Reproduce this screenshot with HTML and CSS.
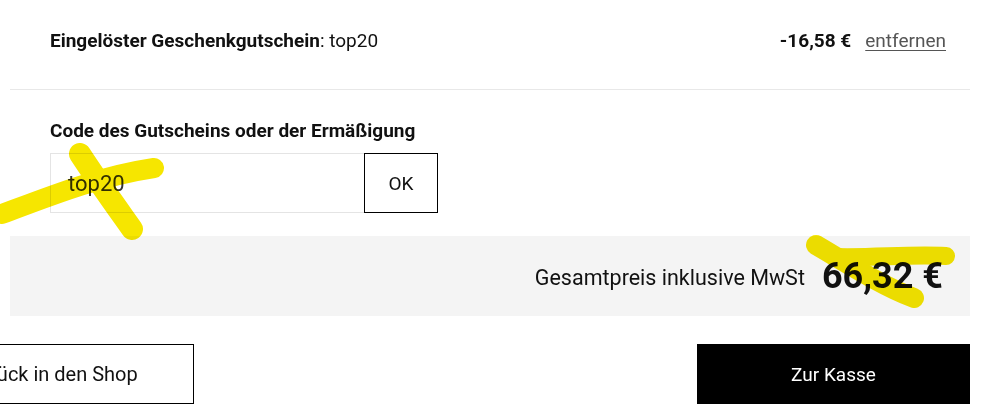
FILE: index.html
```html
<!DOCTYPE html>
<html lang="de">
<head>
<meta charset="utf-8">
<title>Warenkorb</title>
<link rel="stylesheet" href="styles.css">
</head>
<body>
<div class="page">
  <div class="voucher-row">
    <div class="voucher-name"><strong>Eingelöster Geschenkgutschein</strong>: top20</div>
    <div class="voucher-right">
      <span class="voucher-amount">-16,58 €</span>
      <a class="remove" href="#">entfernen</a>
    </div>
  </div>
  <div class="code-block">
    <div class="code-label">Code des Gutscheins oder der Ermäßigung</div>
    <div class="code-form">
      <div class="code-input">top20</div>
      <button class="ok-btn">OK</button>
    </div>
  </div>
  <div class="total-band">
    <span class="total-label">Gesamtpreis inklusive MwSt</span>
    <span class="total-value">66,32 €</span>
  </div>
  <div class="actions">
    <button class="back-btn">Zurück in den Shop</button>
    <button class="checkout-btn">Zur Kasse</button>
  </div>
</div>
<svg class="marks" width="981" height="416" viewBox="0 0 981 416">
  <g stroke="#f6e600" stroke-linecap="round" stroke-linejoin="round" fill="none">
    <path d="M2 214 C 50 196, 100 176, 154 168" stroke-width="20"/>
    <path d="M80 154 C 97 180, 115 205, 132 229" stroke-width="22"/>
    <path d="M816 245 C 845 262, 880 285, 914 298" stroke-width="20"/>
    <path d="M836 257 C 875 258, 910 254, 946 256" stroke-width="18"/>
  </g>
</svg>
</body>
</html>
```

FILE: styles.css
```css
* { box-sizing: border-box; }
html, body { margin: 0; padding: 0; background: #fff; }
body {
  font-family: Roboto, "Liberation Sans", Arial, sans-serif;
  color: #111;
  width: 981px;
  height: 416px;
  overflow: hidden;
  position: relative;
}
.page {
  width: 960px;
  margin-left: 10px;
}
.voucher-row {
  height: 90px;
  border-bottom: 1px solid #e8e8e8;
  display: flex;
  align-items: center;
  justify-content: space-between;
  padding: 0 24px 8px 40px;
  font-size: 19px;
}
.voucher-name strong { font-weight: 700; }
.voucher-right { display: flex; align-items: center; gap: 14px; }
.voucher-amount { font-weight: 700; }
.remove {
  color: #555;
  text-decoration: underline;
  text-underline-offset: 3px;
  text-decoration-thickness: 1px;
}
.code-block {
  padding: 29px 0 0 40px;
}
.code-label {
  font-size: 19px;
  font-weight: 700;
  line-height: 24px;
}
.code-form {
  display: flex;
  margin-top: 10px;
  height: 60px;
}
.code-input {
  width: 314px;
  height: 60px;
  border: 1px solid #e4e4e4;
  border-right: none;
  padding-left: 17px;
  display: flex;
  align-items: center;
  font-size: 22px;
  color: #333;
}
.ok-btn {
  width: 74px;
  height: 60px;
  border: 1px solid #000;
  background: #fff;
  font-family: inherit;
  font-size: 19px;
  color: #111;
  padding: 0;
}
.total-band {
  margin-top: 23px;
  height: 80px;
  background: #f4f4f4;
  display: flex;
  align-items: center;
  justify-content: flex-end;
  gap: 17px;
  padding-right: 27px;
}
.total-label { font-size: 21.5px; padding-top: 2px; }
.total-value { font-size: 36px; font-weight: 700; }
.actions {
  margin-top: 28px;
  display: flex;
  justify-content: space-between;
  height: 60px;
}
.back-btn {
  margin-left: -99px;
  width: 283px;
  height: 60px;
  border: 1px solid #000;
  background: #fff;
  font-family: inherit;
  font-size: 20px;
  color: #111;
  padding: 0;
}
.checkout-btn {
  width: 273px;
  height: 60px;
  border: none;
  background: #000;
  color: #fff;
  font-family: inherit;
  font-size: 19px;
  padding: 0;
}
.marks {
  position: absolute;
  left: 0;
  top: 0;
  pointer-events: none;
  mix-blend-mode: multiply;
}
```
